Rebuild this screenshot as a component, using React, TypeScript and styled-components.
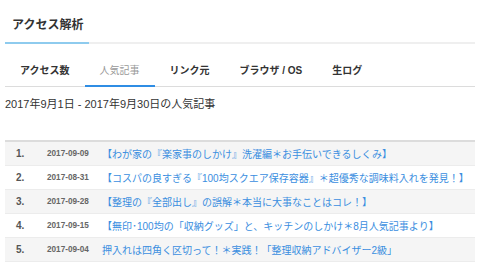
import React from "react";
import styled, { createGlobalStyle } from "styled-components";

const Global = createGlobalStyle`
  html, body { margin: 0; padding: 0; background: #fff; }
  body { font-family: "Liberation Sans", "Noto Sans CJK JP", sans-serif; color: #333; }
  * { box-sizing: border-box; }
`;

const Page = styled.div`
  width: 480px;
  padding: 0 5px;
`;

const Header = styled.div`
  display: flex;
  padding-top: 16px;
  border-bottom: 2px solid #efefef;
`;

const Title = styled.h1`
  margin: 0 0 -2px;
  width: 84px;
  padding: 0 0 8px 7px;
  font-size: 12px;
  line-height: 18px;
  font-weight: bold;
  color: #333;
  border-bottom: 2px solid #8ecbee;
`;

const Tabs = styled.nav`
  display: flex;
  margin-top: 11px;
  border-bottom: 1px solid #dcdcdc;
`;

const Tab = styled.div<{ $active?: boolean }>`
  padding: 9px 15px 7px;
  margin-bottom: -1px;
  font-size: 10px;
  line-height: 14px;
  font-weight: ${(p) => (p.$active ? "normal" : "bold")};
  color: ${(p) => (p.$active ? "#999" : "#333")};
  border-bottom: 2px solid ${(p) => (p.$active ? "#2f8de4" : "transparent")};
  white-space: nowrap;
`;

const Period = styled.h2`
  margin: 10px 0 29px;
  font-size: 11px;
  line-height: 14px;
  font-weight: normal;
  color: #333;
`;

const Table = styled.div`
  width: 470px;
  border-top: 2px solid #dcdcdc;
`;

const Row = styled.div<{ $odd: boolean }>`
  display: grid;
  grid-template-columns: 42px 55px 1fr;
  align-items: center;
  height: 24px;
  background: ${(p) => (p.$odd ? "#f5f5f5" : "#fff")};
  border-bottom: 1px solid #ececec;
`;

const Rank = styled.div`
  padding-left: 11px;
  font-size: 10px;
  font-weight: bold;
  color: #555;
`;

const DateCell = styled.div`
  font-size: 8.2px;
  font-weight: bold;
  color: #666;
`;

const Link = styled.a`
  font-size: 10px;
  color: #3a8ee0;
  text-decoration: none;
  white-space: nowrap;
`;

const rows = [
  ["2017-09-09", "【わが家の『楽家事のしかけ』洗濯編＊お手伝いできるしくみ】"],
  ["2017-08-31", "【コスパの良すぎる『100均スクエア保存容器』＊超優秀な調味料入れを発見！】"],
  ["2017-09-28", "【整理の『全部出し』の誤解＊本当に大事なことはコレ！】"],
  ["2017-09-15", "【無印･100均の「収納グッズ」と、キッチンのしかけ＊8月人気記事より】"],
  ["2017-09-04", "押入れは四角く区切って！＊実践！「整理収納アドバイザー2級」"],
];

const tabs = ["アクセス数", "人気記事", "リンク元", "ブラウザ / OS", "生ログ"];

export default function App() {
  return (
    <Page>
      <Global />
      <Header>
        <Title>アクセス解析</Title>
      </Header>
      <Tabs>
        {tabs.map((t, i) => (
          <Tab key={t} $active={i === 1}>
            {t}
          </Tab>
        ))}
      </Tabs>
      <Period>2017年9月1日 - 2017年9月30日の人気記事</Period>
      <Table>
        {rows.map(([d, t], i) => (
          <Row key={i} $odd={i % 2 === 0}>
            <Rank>{i + 1}.</Rank>
            <DateCell>{d}</DateCell>
            <Link href="#">{t}</Link>
          </Row>
        ))}
      </Table>
    </Page>
  );
}
